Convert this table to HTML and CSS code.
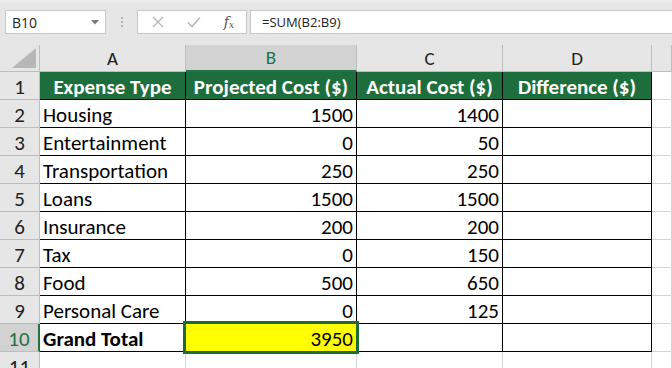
FILE: index.html
```html
<!DOCTYPE html>
<html>
<head>
<meta charset="utf-8">
<link rel="stylesheet" href="styles.css">
</head>
<body>
<div class="app">
  <div class="toolbar">
    <div class="namebox">
      <span class="ref">B10</span>
      <svg class="caret" width="8" height="5" viewBox="0 0 8 5"><path d="M0 0H8L4 4.5Z" fill="#7a7a7a"/></svg>
    </div>
    <div class="grip"><i></i><i></i><i></i></div>
    <div class="fxbox">
      <svg class="ico" width="12" height="12" viewBox="0 0 12 12"><path d="M1 1L11 11M11 1L1 11" stroke="#b8b8b8" stroke-width="1.4" fill="none"/></svg>
      <svg class="ico" width="14" height="12" viewBox="0 0 14 12"><path d="M1 6.5L5 10.5L13 1.5" stroke="#b8b8b8" stroke-width="1.6" fill="none"/></svg>
      <span class="fx">f<sub>x</sub></span>
    </div>
    <div class="formula">=SUM(B2:B9)</div>
  </div>
  <div class="sheet">
    <div class="corner"><svg width="24" height="20" viewBox="0 0 24 20"><path d="M24 0V20H0Z" fill="#b7b7b7"/></svg></div>
    <div class="ch">A</div>
    <div class="ch sel">B</div>
    <div class="ch">C</div>
    <div class="ch">D</div>
    <div class="ch"></div>

    <div class="rh">1</div>
    <div class="c t g">Expense Type</div>
    <div class="c t g">Projected Cost ($)</div>
    <div class="c t g">Actual Cost ($)</div>
    <div class="c t g">Difference ($)</div>
    <div class="c"></div>

    <div class="rh">2</div>
    <div class="c t">Housing</div>
    <div class="c t n">1500</div>
    <div class="c t n">1400</div>
    <div class="c t"></div>
    <div class="c"></div>

    <div class="rh">3</div>
    <div class="c t">Entertainment</div>
    <div class="c t n">0</div>
    <div class="c t n">50</div>
    <div class="c t"></div>
    <div class="c"></div>

    <div class="rh">4</div>
    <div class="c t">Transportation</div>
    <div class="c t n">250</div>
    <div class="c t n">250</div>
    <div class="c t"></div>
    <div class="c"></div>

    <div class="rh">5</div>
    <div class="c t">Loans</div>
    <div class="c t n">1500</div>
    <div class="c t n">1500</div>
    <div class="c t"></div>
    <div class="c"></div>

    <div class="rh">6</div>
    <div class="c t">Insurance</div>
    <div class="c t n">200</div>
    <div class="c t n">200</div>
    <div class="c t"></div>
    <div class="c"></div>

    <div class="rh">7</div>
    <div class="c t">Tax</div>
    <div class="c t n">0</div>
    <div class="c t n">150</div>
    <div class="c t"></div>
    <div class="c"></div>

    <div class="rh">8</div>
    <div class="c t">Food</div>
    <div class="c t n">500</div>
    <div class="c t n">650</div>
    <div class="c t"></div>
    <div class="c"></div>

    <div class="rh">9</div>
    <div class="c t">Personal Care</div>
    <div class="c t n">0</div>
    <div class="c t n">125</div>
    <div class="c t"></div>
    <div class="c"></div>

    <div class="rh sel">10</div>
    <div class="c t b">Grand Total</div>
    <div class="c t n y active">3950</div>
    <div class="c t"></div>
    <div class="c t"></div>
    <div class="c"></div>

    <div class="rh">11</div>
    <div class="c"></div>
    <div class="c"></div>
    <div class="c"></div>
    <div class="c"></div>
    <div class="c"></div>
  </div>
</div>
</body>
</html>
```

FILE: styles.css
```css
html, body {
  margin: 0;
  padding: 0;
  background: #ffffff;
  overflow: hidden;
}

.app {
  width: 672px;
  height: 368px;
  overflow: hidden;
  background: #e6e6e6;
}

.toolbar {
  height: 45px;
  box-sizing: border-box;
  padding-top: 10px;
  display: flex;
  align-items: flex-start;
  background: linear-gradient(#ededed 0, #e6e6e6 4px);
  font-family: "Open Sans", "Noto Sans", sans-serif;
}

.namebox {
  margin-left: 5px;
  width: 101px;
  height: 24px;
  box-sizing: border-box;
  background: #fff;
  border: 1px solid #c8c8c8;
  display: flex;
  align-items: center;
  justify-content: space-between;
  padding: 0 6px 0 6px;
}

.ref {
  font-size: 14px;
  color: #222;
}

.caret {
  display: block;
}

.grip {
  width: 31px;
  height: 24px;
  display: flex;
  flex-direction: column;
  align-items: center;
  justify-content: center;
  gap: 2px;
}

.grip i {
  display: block;
  width: 2px;
  height: 2px;
  background: #b4b4b4;
}

.fxbox {
  width: 110px;
  height: 24px;
  box-sizing: border-box;
  background: #fff;
  border: 1px solid #c8c8c8;
  display: flex;
  align-items: center;
  padding: 0 12px 0 14px;
  justify-content: space-between;
}

.ico {
  display: block;
}

.fx {
  font-family: "DejaVu Serif", "Liberation Serif", serif;
  font-style: italic;
  font-size: 14px;
  color: #555;
  line-height: 1;
}

.fx sub {
  font-size: 9px;
  vertical-align: -1px;
}

.formula {
  flex: 1;
  margin-left: 3px;
  height: 24px;
  box-sizing: border-box;
  background: #fff;
  border: 1px solid #c8c8c8;
  border-right: none;
  display: flex;
  align-items: center;
  padding-left: 11px;
  font-size: 13px;
  color: #222;
}

.sheet {
  display: grid;
  grid-template-columns: 40px 146px 171px 146px 149px 1fr;
  grid-template-rows: 27px;
  grid-auto-rows: 28px;
  background: #fff;
  font-family: Calibri, Carlito, Lato, sans-serif;
  font-size: 21px;
  line-height: 24px;
}

.corner {
  background: #e6e6e6;
  border-right: 1px solid #bdbdbd;
  border-bottom: 1px solid #bdbdbd;
  display: flex;
  align-items: flex-end;
  justify-content: flex-end;
  padding: 0 3px 3px 0;
  box-sizing: border-box;
}

.corner svg {
  display: block;
}

.ch {
  background: #e6e6e6;
  border-right: 1px solid #bdbdbd;
  border-bottom: 1px solid #bdbdbd;
  display: flex;
  align-items: center;
  justify-content: center;
  padding-top: 1px;
  color: #222;
  font-size: 19px;
  box-sizing: border-box;
}

.ch.sel {
  background: #d2d2d2;
  color: #217346;
  border-bottom: 2px solid #217346;
}

.rh {
  background: #e6e6e6;
  border-right: 1px solid #bdbdbd;
  border-bottom: 1px solid #bdbdbd;
  display: flex;
  align-items: flex-end;
  justify-content: center;
  padding-bottom: 0;
  color: #222;
  box-sizing: border-box;
}

.rh.sel {
  background: #d2d2d2;
  color: #217346;
  border-right: 2px solid #217346;
}

.c {
  border-right: 1px solid #d4d4d4;
  border-bottom: 1px solid #d4d4d4;
  display: flex;
  align-items: flex-end;
  padding: 0 3px 0 3px;
  box-sizing: border-box;
  color: #000;
  white-space: nowrap;
  overflow: visible;
}

.c.t {
  border-right-color: #000;
  border-bottom-color: #000;
}

.c.g {
  background: #1d6e3c;
  color: #fff;
  font-weight: bold;
  justify-content: center;
}

.c.n {
  justify-content: flex-end;
}

.c.b {
  font-weight: bold;
}

.c.y {
  background: #ffff00;
}

.active {
  position: relative;
}

.active::after {
  content: "";
  position: absolute;
  left: -3px;
  top: -3px;
  right: -3px;
  bottom: -3px;
  border: 3px solid #1e6b3a;
  pointer-events: none;
}
```
